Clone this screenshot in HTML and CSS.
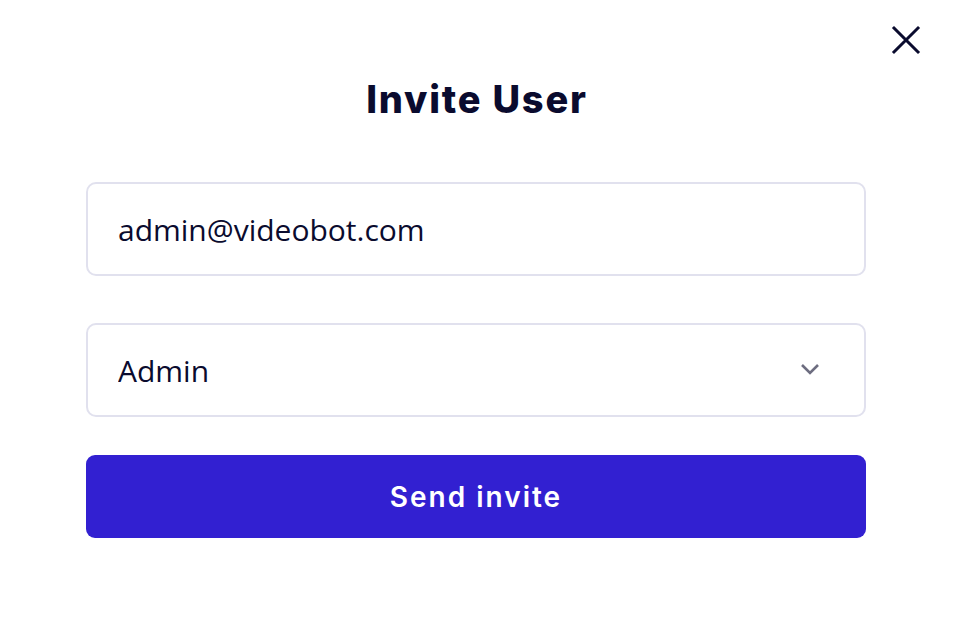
FILE: index.html
```html
<!DOCTYPE html>
<html lang="en">
<head>
    <meta charset="UTF-8">
    <meta name="viewport" content="width=device-width, initial-scale=1.0">
    <title>Invite User</title>
    <link rel="stylesheet" href="styles.css">
</head>
<body>
    <div class="modal">
        <button class="close" aria-label="Close">
            <svg width="30" height="30" viewBox="0 0 30 30">
                <path d="M3 3 L27 27 M27 3 L3 27" stroke="#0a0b2e" stroke-width="3" stroke-linecap="square" fill="none"/>
            </svg>
        </button>
        <h2>Invite User</h2>
        <form class="invite-form">
            <input type="email" class="field" value="admin@videobot.com">
            <div class="select-wrap">
                <select class="field">
                    <option>Admin</option>
                    <option>Editor</option>
                    <option>Viewer</option>
                </select>
                <svg class="chevron" width="20" height="12" viewBox="0 0 20 12">
                    <path d="M2 2 L10 10 L18 2" stroke="#6d6d80" stroke-width="2.6" fill="none"/>
                </svg>
            </div>
            <button type="button" class="button">Send invite</button>
        </form>
    </div>
</body>
</html>
```

FILE: styles.css
```css
body {
    margin: 0;
    padding: 0;
    background-color: #ffffff;
    font-family: "Open Sans", Arial, sans-serif;
    color: #0a0b2e;
}
.modal {
    position: relative;
    width: 954px;
    height: 620px;
}
.close {
    position: absolute;
    top: 25px;
    right: 33px;
    width: 30px;
    height: 30px;
    padding: 0;
    border: none;
    background: none;
    cursor: pointer;
}
h2 {
    margin: 0;
    padding-top: 74px;
    text-align: center;
    font-family: Inter, "DejaVu Sans", sans-serif;
    font-weight: 800;
    font-size: 38px;
    letter-spacing: 1.8px;
    line-height: 50px;
    color: #0a0b2e;
}
.invite-form {
    display: flex;
    flex-direction: column;
    padding: 58px 88px 0 86px;
}
.field {
    box-sizing: border-box;
    width: 100%;
    height: 94px;
    padding: 0 30px;
    border: 2px solid #e1e1ee;
    border-radius: 10px;
    background: #ffffff;
    font-family: "Open Sans", Arial, sans-serif;
    font-size: 30px;
    color: #0a0b2e;
    outline: none;
    appearance: none;
}
.select-wrap {
    position: relative;
    margin-top: 47px;
}
.chevron {
    position: absolute;
    top: 40px;
    right: 46px;
    pointer-events: none;
}
.button {
    margin-top: 38px;
    height: 83px;
    border: none;
    border-radius: 9px;
    background-color: #3220d1;
    color: #ffffff;
    font-family: Inter, "DejaVu Sans", sans-serif;
    font-weight: 600;
    font-size: 28px;
    letter-spacing: 2px;
    cursor: pointer;
}
```
